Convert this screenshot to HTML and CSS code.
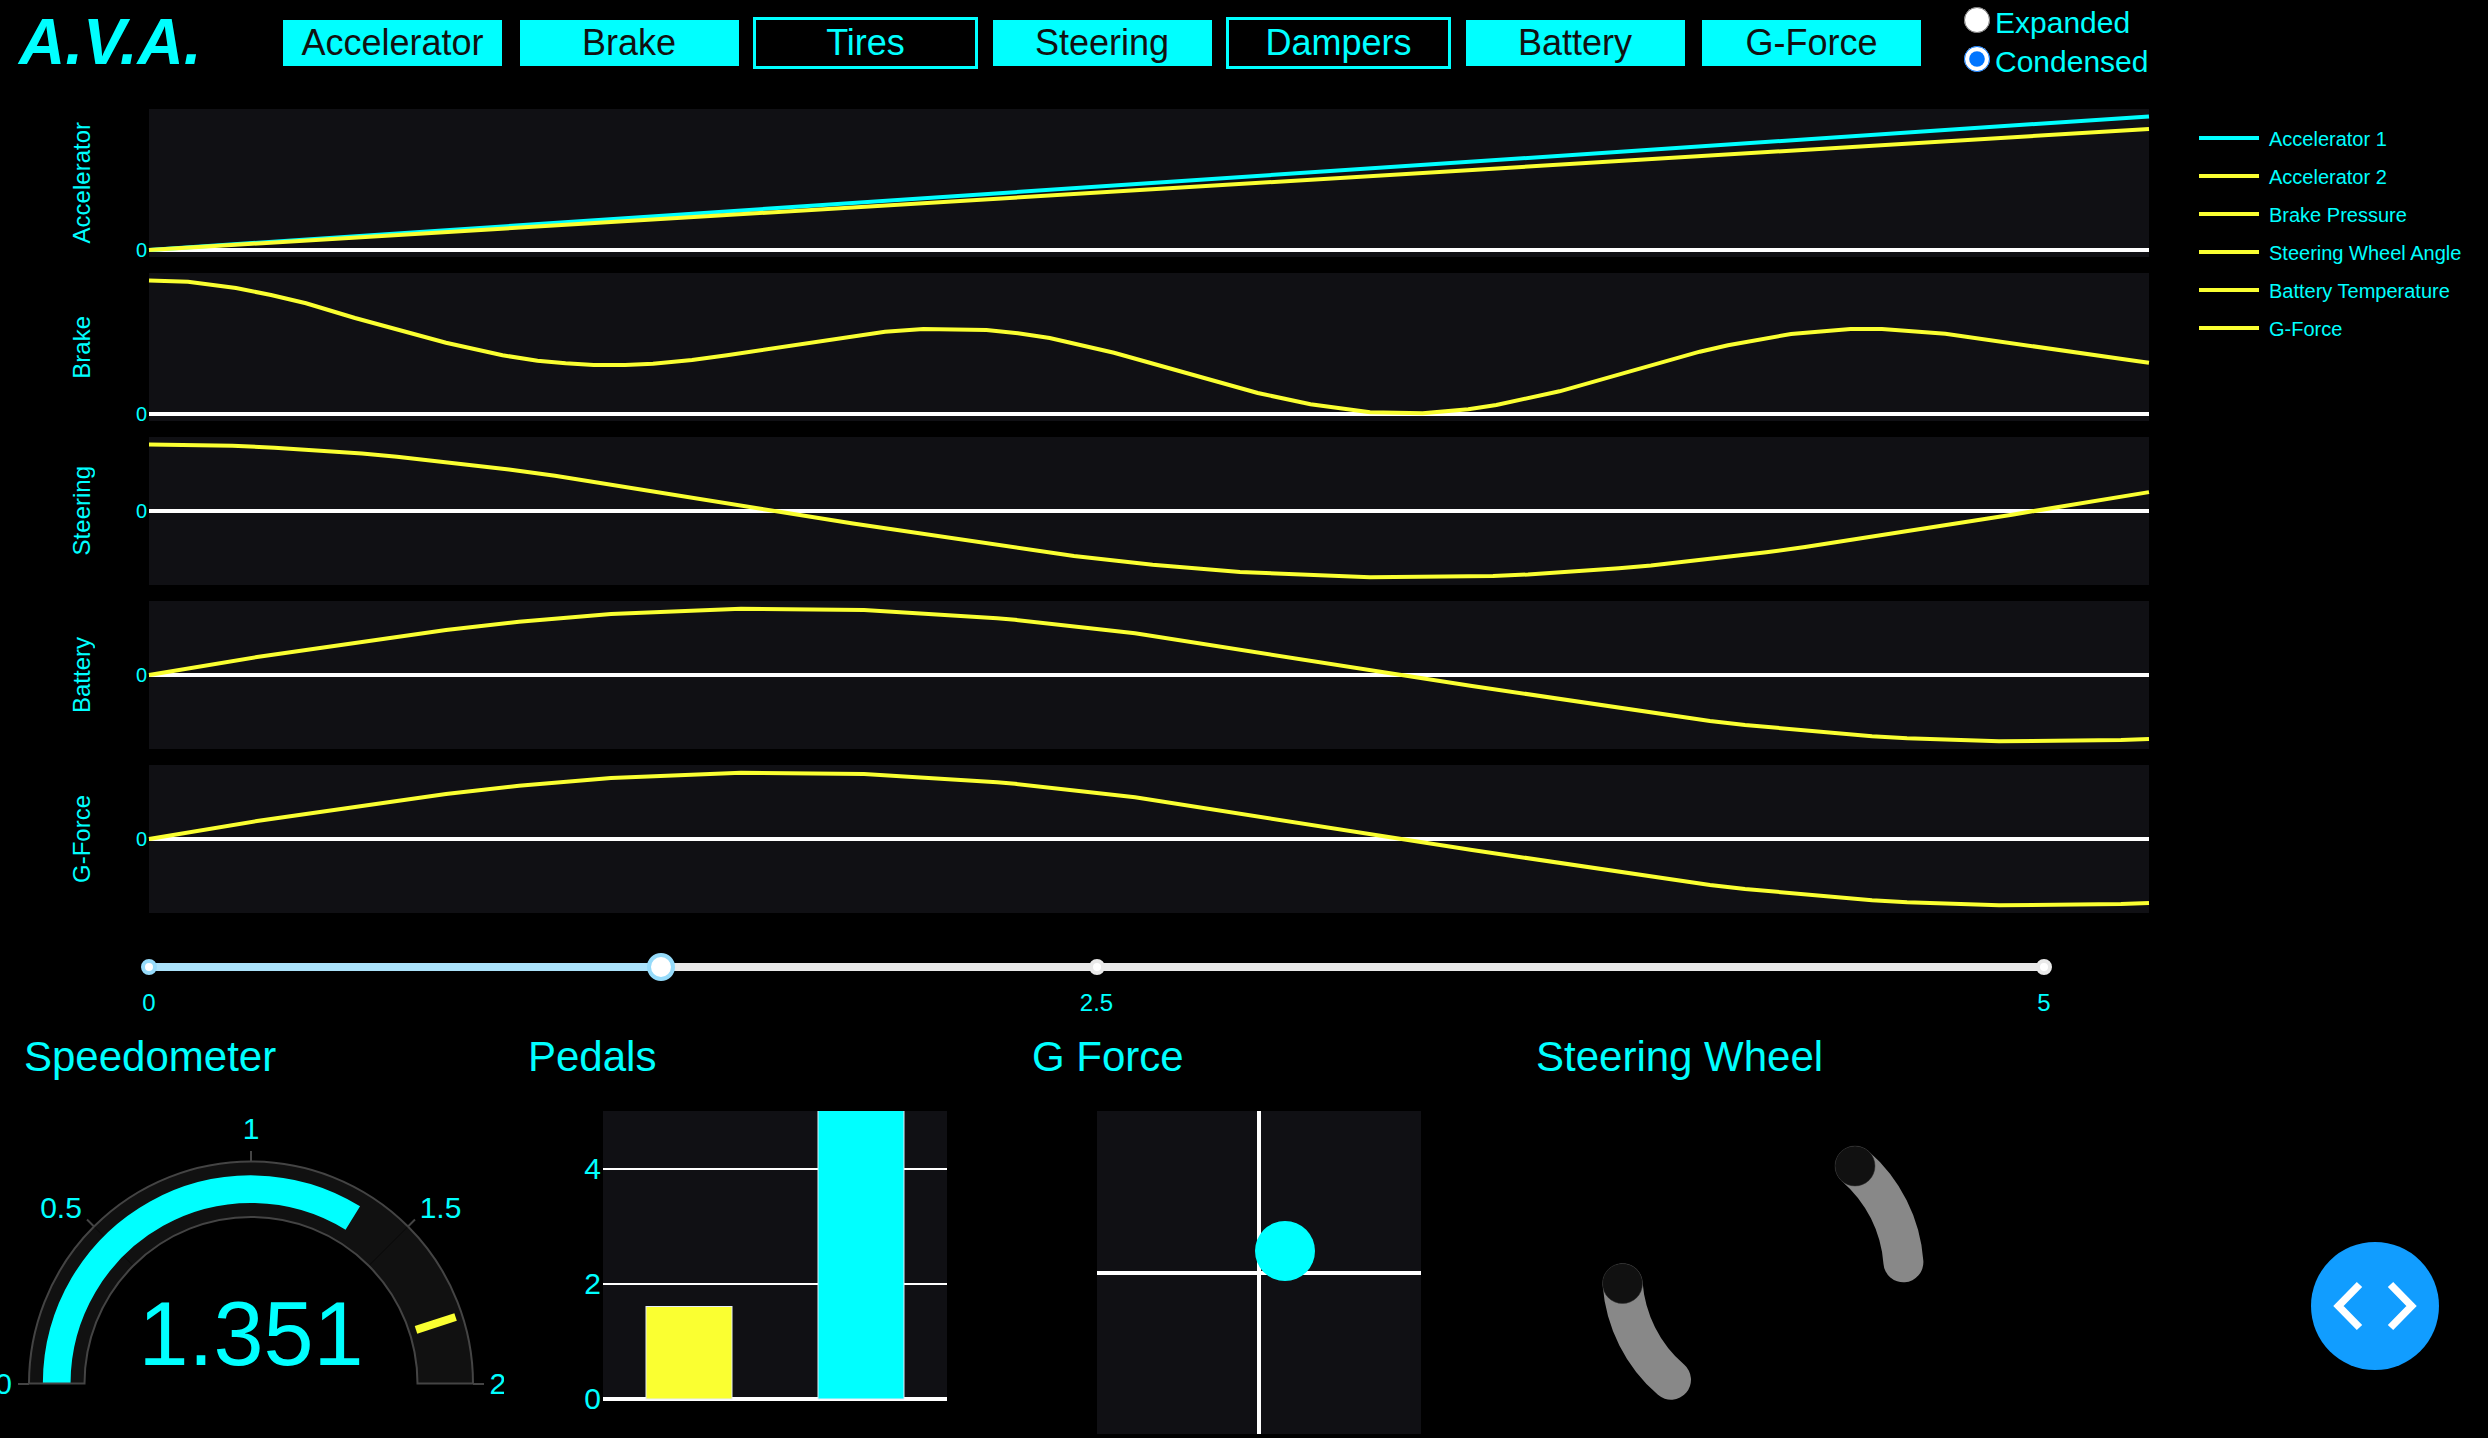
FILE: index.html
```html
<!DOCTYPE html>
<html lang="en">
<head>
<meta charset="utf-8">
<title>A.V.A.</title>
<link rel="stylesheet" href="styles.css">
</head>
<body>
<header class="topbar">
  <h1 class="logo">A.V.A.</h1>
  <nav class="toggles">
    <button class="toggle on">Accelerator</button>
    <button class="toggle on">Brake</button>
    <button class="toggle">Tires</button>
    <button class="toggle on">Steering</button>
    <button class="toggle">Dampers</button>
    <button class="toggle on">Battery</button>
    <button class="toggle on">G-Force</button>
  </nav>
  <div class="view-mode">
    <label class="option"><input type="radio" name="view"><span>Expanded</span></label>
    <label class="option"><input type="radio" name="view" checked><span>Condensed</span></label>
  </div>
</header>

<main>
  <section class="telemetry">
    <div class="charts">
      <div class="chart">
        <div class="axis-title"><span>Accelerator</span></div>
        <svg class="plot" viewBox="0 0 2000 148">
          <rect class="plot-bg" width="2000" height="148"/>
          <path class="zero" d="M0 141H2000"/>
          <path class="trace cyan" d="M0 141L2000 7.4"/>
          <path class="trace" d="M0 141L2000 20"/>
          <text class="tick" x="-2" y="148">0</text>
        </svg>
      </div>
      <div class="chart">
        <div class="axis-title"><span>Brake</span></div>
        <svg class="plot" viewBox="0 0 2000 148">
          <rect class="plot-bg" width="2000" height="148"/>
          <path class="zero" d="M0 141H2000"/>
          <polyline class="trace" points="0,7.4 39,8.7 87,15 122,22 157,30.3 206,45 297,69.7 353.5,82.3 388.5,87.7 416.6,90.3 444.7,92 476,92 504,90.7 543,87 578,82.3 736,58.7 774.4,56 837.5,57 869,60.3 900.7,65 965,79.7 1108.8,120 1161.5,131.3 1221,139.3 1273.7,140.3 1319.3,136.3 1347.3,132 1410.5,118.3 1550.8,78.7 1579,72.3 1642,61 1701.6,56 1733,56 1796.3,60.7 1989,88.3 2000,89.7"/>
          <text class="tick" x="-2" y="148">0</text>
        </svg>
      </div>
      <div class="chart">
        <div class="axis-title"><span>Steering</span></div>
        <svg class="plot" viewBox="0 0 2000 148">
          <rect class="plot-bg" width="2000" height="148"/>
          <path class="zero" d="M0 74H2000"/>
          <polyline class="trace" points="0,7.4 83.4,8.8 125.5,10.7 213,16.6 248,19.8 360,32.6 406,38.8 704,86.5 925,119 1003.6,127.7 1091,135 1221,140.3 1344,139 1379,137.5 1470,131.3 1502,128.5 1617.4,115.3 1656,110.1 1863,77.7 2000,55.1"/>
          <text class="tick" x="-2" y="81">0</text>
        </svg>
      </div>
      <div class="chart">
        <div class="axis-title"><span>Battery</span></div>
        <svg class="plot" viewBox="0 0 2000 148">
          <rect class="plot-bg" width="2000" height="148"/>
          <path class="zero" d="M0 74H2000"/>
          <polyline class="trace" points="0,74 108,56 297,29 370,20.8 462,13.1 592,7.7 715,9 848,17.3 866,18.8 986,32.3 1323,85 1561,119.9 1596,124 1723,135.2 1758,137.3 1850,140.3 1972,139 2000,137.9"/>
          <text class="tick" x="-2" y="81">0</text>
        </svg>
      </div>
      <div class="chart">
        <div class="axis-title"><span>G-Force</span></div>
        <svg class="plot" viewBox="0 0 2000 148">
          <rect class="plot-bg" width="2000" height="148"/>
          <path class="zero" d="M0 74H2000"/>
          <polyline class="trace" points="0,74 108,56 297,29 370,20.8 462,13.1 592,7.7 715,9 848,17.3 866,18.8 986,32.3 1323,85 1561,119.9 1596,124 1723,135.2 1758,137.3 1850,140.3 1972,139 2000,137.9"/>
          <text class="tick" x="-2" y="81">0</text>
        </svg>
      </div>
    </div>
    <ul class="legend">
      <li class="cyan-key"><span>Accelerator 1</span></li>
      <li><span>Accelerator 2</span></li>
      <li><span>Brake Pressure</span></li>
      <li><span>Steering Wheel Angle</span></li>
      <li><span>Battery Temperature</span></li>
      <li><span>G-Force</span></li>
    </ul>
  </section>

  <section class="slider">
    <div class="rail">
      <div class="track" style="width:27.02%"></div>
      <i class="dot active" style="left:0"></i>
      <i class="dot" style="left:50%"></i>
      <i class="dot" style="left:100%"></i>
      <i class="handle" style="left:27.02%"></i>
    </div>
    <div class="marks"><span>0</span><span>2.5</span><span>5</span></div>
  </section>

  <section class="gauges">
    <div class="panel">
      <h2>Speedometer</h2>
      <svg class="figure" viewBox="0 1081 504 357">
        <path class="gauge-bg" d="M29 1383.5A222 222 0 0 1 473 1383.5H417.5A166.5 166.5 0 0 0 84.5 1383.5Z"/>
        <path class="gauge-seam" d="M94 1226.5L133.3 1265.8M408 1226.5L368.7 1265.8"/>
        <path class="gauge-bar" d="M56.7 1383A194.3 194.3 0 0 1 352.8 1218"/>
        <path class="gauge-outline" d="M29 1383.5A222 222 0 0 1 473 1383.5H417.5A166.5 166.5 0 0 0 84.5 1383.5Z"/>
        <path class="gauge-outline" d="M18 1384H29M473 1384H484M251 1151V1161M87 1219.5L94 1226.5M415 1219.5L408 1226.5"/>
        <path class="gauge-mark" d="M416 1329.9L455.6 1317"/>
        <g class="label">
          <text x="3.7" y="1394" text-anchor="middle">0</text>
          <text x="61" y="1218" text-anchor="middle">0.5</text>
          <text x="251" y="1139" text-anchor="middle">1</text>
          <text x="440.5" y="1218" text-anchor="middle">1.5</text>
          <text x="489.5" y="1394">2</text>
        </g>
        <text class="reading" x="251" y="1365">1.351</text>
      </svg>
    </div>
    <div class="panel">
      <h2>Pedals</h2>
      <svg class="figure" viewBox="504 1081 504 357">
        <rect class="plot-bg" x="603" y="1111" width="344" height="288"/>
        <path class="grid" d="M603 1169H947M603 1284H947"/>
        <path class="zero" d="M603 1399H947"/>
        <rect class="bar yellow-bar" x="646" y="1306.5" width="86" height="92.5"/>
        <path class="bar cyan-bar" d="M818 1111V1399H904V1111"/>
        <g class="label">
          <text x="601" y="1179" text-anchor="end">4</text>
          <text x="601" y="1294" text-anchor="end">2</text>
          <text x="601" y="1409" text-anchor="end">0</text>
        </g>
      </svg>
    </div>
    <div class="panel">
      <h2>G Force</h2>
      <svg class="figure" viewBox="1008 1081 504 357">
        <rect class="plot-bg" x="1097" y="1111" width="324" height="323"/>
        <path class="zero" d="M1097 1273H1421M1259 1111V1434"/>
        <circle class="cyan-bar" cx="1285" cy="1251" r="30"/>
      </svg>
    </div>
    <div class="panel">
      <h2>Steering Wheel</h2>
      <svg class="figure" viewBox="1512 1081 504 357">
        <path class="wheel" d="M1855 1166A140.8 140.8 0 0 1 1903.4 1262.3"/>
        <path class="wheel" d="M1671 1379.7A140.8 140.8 0 0 1 1622.6 1283.5"/>
        <circle class="knob" cx="1855" cy="1166" r="20"/>
        <circle class="knob" cx="1622.5" cy="1283.5" r="20"/>
      </svg>
    </div>
  </section>
</main>

<button class="devtools" aria-label="Debug menu">
  <svg viewBox="0 0 128 128"><path d="M48.5 42.5L27.5 64L48.5 85.5M79.5 42.5L100.5 64L79.5 85.5"/></svg>
</button>
</body>
</html>
```
FILE: styles.css
```css
* { box-sizing: border-box; }

body {
  margin: 0;
  width: 2488px;
  height: 1438px;
  overflow: hidden;
  background: #000;
  color: #0ff;
  font-family: "Liberation Sans", Arial, sans-serif;
}

svg { display: block; }

.topbar {
  display: flex;
  align-items: flex-start;
  height: 109px;
}

.logo {
  width: 280px;
  margin: 0;
  padding: 9px 0 0 19px;
  font-size: 64px;
  font-style: italic;
  line-height: 66px;
}

.toggles {
  display: flex;
  gap: 11.5px;
  padding-top: 17px;
}

.toggle {
  width: 225px;
  height: 52px;
  padding: 0;
  border: 3px solid #0ff;
  background: #000;
  color: #0ff;
  font-family: inherit;
  font-size: 36px;
  line-height: 46px;
}

.toggle.on {
  border-color: #000;
  background: #0ff;
  color: #111;
}

.view-mode {
  padding: 3px 0 0 40px;
}

.option {
  display: flex;
  align-items: flex-start;
  height: 39px;
  font-size: 30px;
  line-height: 40px;
}

.option input {
  width: 26px;
  height: 26px;
  margin: 4px 5px 0 0;
}

.telemetry {
  display: flex;
  height: 804px;
}

.charts {
  display: flex;
  flex-direction: column;
  gap: 16px;
}

.chart {
  display: flex;
  height: 148px;
}

.axis-title {
  display: flex;
  justify-content: center;
  align-items: center;
  width: 149px;
  padding-left: 14px;
  font-size: 24px;
}

.axis-title span {
  writing-mode: vertical-rl;
  transform: rotate(180deg);
}

.plot {
  width: 2000px;
  height: 148px;
  overflow: visible;
}

.plot-bg { fill: #101014; }

.zero {
  fill: none;
  stroke: #fff;
  stroke-width: 4;
}

.grid {
  stroke: #fff;
  stroke-width: 2;
}

.trace {
  fill: none;
  stroke: #faff31;
  stroke-width: 4;
}

.trace.cyan { stroke: #0ff; }

.tick {
  fill: #0ff;
  font-size: 20px;
  text-anchor: end;
}

.legend {
  margin: 0;
  padding: 10px 0 0 50px;
  list-style: none;
  font-size: 20px;
  line-height: 36px;
}

.legend li {
  display: flex;
  align-items: center;
  gap: 10px;
  height: 38px;
}

.legend span { padding-top: 2px; }

.legend li::before {
  content: "";
  width: 60px;
  height: 4px;
  background: #faff31;
}

.legend .cyan-key::before { background: #0ff; }

.slider {
  width: 1895px;
  height: 119px;
  margin-left: 149px;
  padding-top: 50px;
}

.rail {
  position: relative;
  height: 8px;
  background: #e9e9e9;
}

.track {
  height: 8px;
  background: #abe2fb;
}

.dot,
.handle {
  position: absolute;
  top: 50%;
  border: 4px solid #e9e9e9;
  border-radius: 50%;
  background: #fff;
  transform: translate(-50%, -50%);
}

.dot {
  width: 16px;
  height: 16px;
}

.dot.active,
.handle { border-color: #96dbfa; }

.handle {
  width: 28px;
  height: 28px;
}

.marks {
  display: flex;
  justify-content: space-between;
  margin: 18px -30px 0;
  font-size: 24px;
  line-height: 28px;
}

.marks span {
  width: 60px;
  text-align: center;
}

.gauges {
  display: grid;
  grid-template-columns: repeat(4, 504px);
}

.panel h2 {
  margin: 0;
  padding-left: 24px;
  font-size: 42px;
  font-weight: 400;
  line-height: 49px;
}

.figure {
  width: 504px;
  height: 357px;
}

.gauge-bg { fill: #111; }

.gauge-seam {
  stroke: #080808;
  stroke-width: 1;
}

.gauge-bar {
  fill: none;
  stroke: #0ff;
  stroke-width: 27.7;
}

.gauge-outline {
  fill: none;
  stroke: #444;
  stroke-width: 2;
}

.gauge-mark {
  stroke: #faff31;
  stroke-width: 8;
}

.label {
  fill: #0ff;
  font-size: 30px;
}

.reading {
  fill: #0ff;
  font-size: 90px;
  text-anchor: middle;
}

.bar {
  stroke: #e5ecf6;
  stroke-width: 1;
}

.yellow-bar { fill: #faff31; }

.cyan-bar { fill: #0ff; }

.wheel {
  fill: none;
  stroke: #888;
  stroke-width: 40;
  stroke-linecap: round;
}

.knob {
  fill: #111;
  stroke: #333;
  stroke-width: 0.5;
}

.devtools {
  position: absolute;
  left: 2311px;
  top: 1242px;
  width: 128px;
  height: 128px;
  padding: 0;
  border: 0;
  border-radius: 50%;
  background: #119dff;
}

.devtools path {
  fill: none;
  stroke: #fff;
  stroke-width: 7.5;
}
```
